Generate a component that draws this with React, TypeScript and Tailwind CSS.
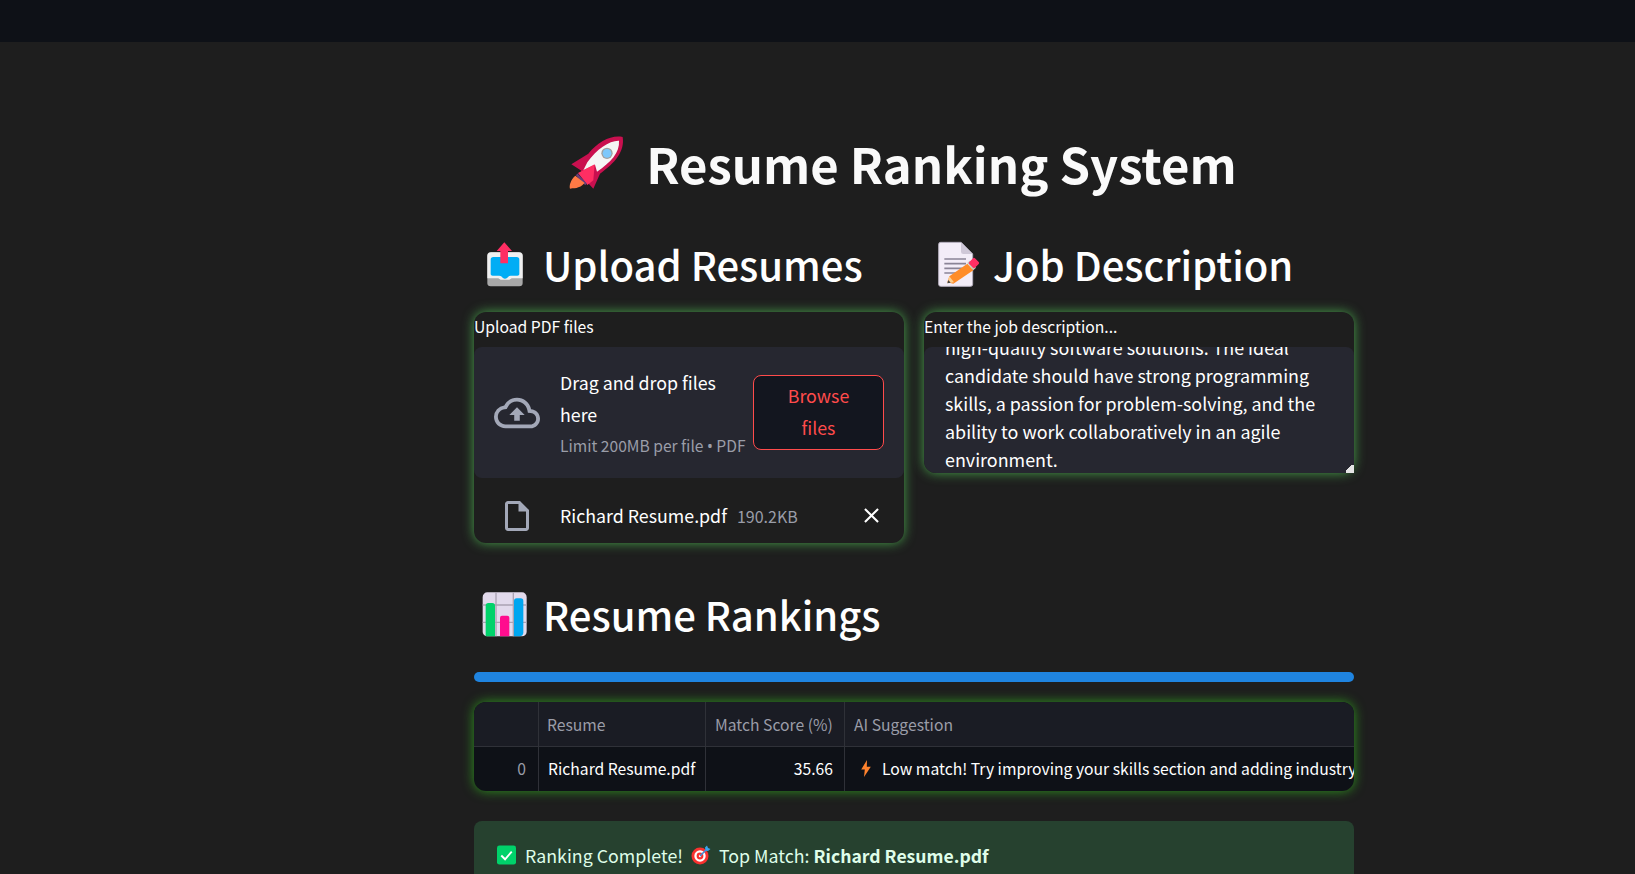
import { MdClose, MdOutlineCloudUpload, MdOutlineInsertDriveFile } from "react-icons/md";

function RocketIcon() {
  return (
    <svg viewBox="0 0 270 240" className="w-[90px] h-[80px] shrink-0">
      <path d="M218 42C185 35 145 55 115 92L64 124L92 142L112 178L130 197L150 152C195 120 225 85 218 42Z" fill="#c9104f" />
      <path d="M207 53C178 52 140 78 112 118L100 142L135 125L141 146C182 118 210 88 207 53Z" fill="#f5f5f5" />
      <circle cx="171" cy="91" r="17" fill="#a0a0a0" />
      <circle cx="171" cy="91" r="13" fill="#7ec8fb" />
      <path d="M134 124L84 150L112 186L130 172Z" fill="#ff2e63" />
      <path d="M80 154L108 184" stroke="#6a3b7a" strokeWidth="7" />
      <path d="M76 158C62 170 57 188 60 197C70 195 78 198 85 193C95 190 100 184 104 180Z" fill="#ff7a45" />
    </svg>
  );
}

function InboxIcon() {
  return (
    <svg viewBox="0 0 240 210" className="w-[80px] h-[70px] shrink-0">
      <rect x="52" y="70" width="106" height="102" rx="10" fill="#a8a8a8" />
      <path d="M52 82Q52 70 64 70H146Q158 70 158 82V148H125L118 152H92L85 148H52Z" fill="#f0f0f0" />
      <path d="M62 92Q62 84 70 84H140Q148 84 148 92V136Q148 140 142 140H122Q116 140 112 146Q105 152 98 146Q94 140 88 140H68Q62 140 62 136Z" fill="#00adf5" />
      <path d="M103 40L126 66H114V103H91V66H80Z" fill="#ff2e63" />
    </svg>
  );
}

function MemoIcon() {
  return (
    <svg viewBox="0 0 240 210" className="w-[80px] h-[70px] shrink-0">
      <path d="M44 40H105L140 75V166Q140 172 134 172H44Q38 172 38 166V46Q38 40 44 40Z" fill="#f3edf8" stroke="#b5afbd" strokeWidth="3" />
      <path d="M105 40L140 75H112Q105 75 105 68Z" fill="#cfc8d8" />
      <path d="M55 90H120M55 104H120M55 118H110M55 132H90" stroke="#8a8496" strokeWidth="5" />
      <path d="M124 104L142 124L82 164L64 160L70 142Z" fill="#ff8c28" />
      <path d="M70 142L64 163L84 160Z" fill="#ffcf8f" />
      <path d="M64 163L67 153L74 161Z" fill="#444" />
      <path d="M124 102L131 95L150 116L142 124Z" fill="#c4c8b8" />
      <rect x="132" y="90" width="24" height="24" rx="4" transform="rotate(45 144 102)" fill="#ff2e63" />
    </svg>
  );
}

function ChartIcon() {
  return (
    <svg viewBox="0 0 240 210" className="w-[80px] h-[70px] shrink-0">
      <rect x="38" y="40" width="132" height="132" rx="14" fill="#e2daec" />
      <path d="M38 78H170M38 130H170M78 40V172M130 40V172" stroke="#aaa3b3" strokeWidth="4" />
      <path d="M47 80Q47 72 55 72H67Q75 72 75 80V172H47Z" fill="#00d26a" />
      <path d="M90 116Q90 110 96 110H112Q118 110 118 116V172H90Z" fill="#ff0d8e" />
      <path d="M132 66Q132 58 140 58H152Q160 58 160 66V160Q160 172 148 172H132Z" fill="#00a6f0" />
    </svg>
  );
}

function CheckIcon() {
  return (
    <svg viewBox="0 0 20 20" className="w-[19px] h-[20px] shrink-0">
      <rect width="20" height="20" rx="2.5" fill="#00d26a" />
      <path d="M4.5 10.5L8.5 14.5L15.5 6.5" stroke="#fff" strokeWidth="2" fill="none" />
    </svg>
  );
}

function TargetIcon() {
  return (
    <svg viewBox="0 0 20 20" className="w-[20px] h-[20px] shrink-0">
      <circle cx="9" cy="11" r="8.5" fill="#f8312f" />
      <circle cx="9" cy="11" r="5.7" fill="#fff" />
      <circle cx="9" cy="11" r="3.4" fill="#f8312f" />
      <circle cx="9" cy="11" r="1.2" fill="#fff" />
      <path d="M9 11L16 4" stroke="#3f8fd6" strokeWidth="1.6" />
      <path d="M14 2.5L16 0.5L17 3L19.5 4L17 6L14.5 5.5Z" fill="#3ba4ef" />
    </svg>
  );
}

function BoltIcon() {
  return (
    <svg viewBox="0 0 10 17" className="w-[10px] h-[17px] shrink-0">
      <path d="M6 0L0.2 9.5H3.8L3 17L9.8 6.8H5.8Z" fill="#ff822d" />
    </svg>
  );
}

function Heading({ icon, iconClass, title }: { icon: React.ReactNode; iconClass: string; title: string }) {
  return (
    <h2 className="flex items-center h-[70px] text-[40px] leading-[70px] font-medium text-white">
      <span className={iconClass}>{icon}</span>
      <span className="-ml-[2px] whitespace-nowrap">{title}</span>
    </h2>
  );
}

export default function App() {
  return (
    <div
      className="h-[874px] overflow-hidden bg-[#1e1e1e] text-white"
      style={{ fontFamily: '"Noto Sans CJK SC", "Noto Sans", sans-serif' }}
    >
      <div className="h-[42px] bg-[#0e1117]"></div>

      <main className="ml-[474px] w-[880px]">
        <h1 className="mt-[81px] pr-[41px] flex justify-center items-center h-[80px] text-[49px] font-bold text-[#fafafa] whitespace-nowrap">
          <RocketIcon />
          <span className="ml-[6px]">Resume Ranking System</span>
        </h1>

        <div className="mt-[26px] flex gap-5">
          <div className="w-[430px]">
            <Heading icon={<InboxIcon />} iconClass="-ml-[4px] w-[75px] h-[70px] shrink-0" title="Upload Resumes" />
            <div className="mt-[13px] h-[231px] bg-[#1e1e1e] rounded-xl shadow-[0_0_12px_rgba(76,175,80,0.9)] overflow-hidden">
              <div className="h-[35px] text-[15.7px] leading-[30px]">Upload PDF files</div>
              <div className="h-[131px] bg-[#262730] rounded-lg flex items-center pl-[20px]">
                <MdOutlineCloudUpload className="shrink-0 text-[#a3a8b8]" size={46} />
                <div className="ml-[20px] w-[186px] shrink-0">
                  <p className="text-[17.8px] leading-[32px]">Drag and drop files here</p>
                  <p className="mt-[2px] text-[15.6px] leading-[26px] text-[#9a9da8] whitespace-nowrap">
                    Limit 200MB per file <span className="font-['Noto_Sans']">•</span> PDF
                  </p>
                </div>
                <button className="ml-[7px] mb-[1px] w-[131px] h-[75px] px-[20px] pb-[3px] bg-[#13161f] border border-[#ff4b4b] rounded-lg text-[17.8px] leading-[32px] text-[#ff4b4b]">
                  Browse files
                </button>
              </div>
              <div className="h-[65px] pt-[10px] flex items-center pl-[25px]">
                <MdOutlineInsertDriveFile className="shrink-0 text-[#a3a8b8]" size={36} />
                <span className="ml-[25px] text-[17.8px] whitespace-nowrap">Richard Resume.pdf</span>
                <span className="ml-[10px] text-base text-[#9a9da8]">190.2KB</span>
                <MdClose className="ml-auto mr-[20px] text-white" size={25} />
              </div>
            </div>
          </div>

          <div className="w-[430px]">
            <Heading icon={<MemoIcon />} iconClass="ml-[2px] w-[69px] h-[70px] shrink-0" title="Job Description" />
            <div className="mt-[13px] h-[161px] bg-[#1e1e1e] rounded-xl shadow-[0_0_12px_rgba(76,175,80,0.9)]">
              <div className="h-[35px] text-[15.7px] leading-[30px]">Enter the job description...</div>
              <div className="relative h-[126px] bg-[#262730] rounded-t-lg rounded-bl-xl overflow-hidden flex flex-col justify-end pl-[21px] text-[17.9px] leading-[28px]">
                <p className="whitespace-nowrap">high-quality software solutions. The ideal</p>
                <p className="whitespace-nowrap">candidate should have strong programming</p>
                <p className="whitespace-nowrap">skills, a passion for problem-solving, and the</p>
                <p className="whitespace-nowrap">ability to work collaboratively in an agile</p>
                <p className="whitespace-nowrap">environment.</p>
                <div className="absolute right-0 bottom-0 w-[8px] h-[8px] bg-[linear-gradient(135deg,transparent_35%,#e5e5e5_35%)]"></div>
              </div>
            </div>
          </div>
        </div>

        <div className="mt-[36px]">
          <Heading icon={<ChartIcon />} iconClass="-ml-[4px] w-[75px] h-[70px] shrink-0" title="Resume Rankings" />
        </div>

        <div className="mt-[23px] h-[10px] bg-[#1f84e0] rounded-full"></div>

        <div className="mt-[20px] h-[89px] bg-[#0e1117] rounded-xl shadow-[0_0_12px_rgba(50,180,30,0.8)] overflow-hidden text-[15.7px]">
          <div className="grid grid-cols-[65px_167px_139px_1fr] h-[45px] bg-[#1a1c24] border-b border-[#2f3138] text-[#9a9da8] leading-[46px]">
            <div className="border-r border-[#2f3138]"></div>
            <div className="border-r border-[#2f3138] pl-[8px]">Resume</div>
            <div className="border-r border-[#2f3138] pl-[9px] whitespace-nowrap">Match Score (%)</div>
            <div className="pl-[9px]">AI Suggestion</div>
          </div>
          <div className="grid grid-cols-[65px_167px_139px_1fr] h-[44px] leading-[43px]">
            <div className="border-r border-[#2f3138] pr-[12px] text-right text-[#9a9da8]">0</div>
            <div className="border-r border-[#2f3138] pl-[9px] whitespace-nowrap">Richard Resume.pdf</div>
            <div className="border-r border-[#2f3138] pr-[11px] text-right">35.66</div>
            <div className="pl-[16px] pb-[1px] flex items-center gap-[11px] whitespace-nowrap overflow-hidden">
              <BoltIcon />
              <span>Low match! Try improving your skills section and adding industry keywords.</span>
            </div>
          </div>
        </div>

        <div className="mt-[30px] h-[80px] bg-[#26412f] rounded-lg pl-[23px] pt-[20px] flex items-start gap-[9px] text-[17.8px] leading-[28px] text-[#dffde9]">
          <span className="h-[28px] flex items-center"><CheckIcon /></span>
          <span className="whitespace-nowrap">Ranking Complete!</span>
          <span className="-ml-[1px] h-[28px] flex items-center"><TargetIcon /></span>
          <span className="-ml-[1px] whitespace-nowrap">Top Match: <strong className="font-bold text-[17.6px]">Richard Resume.pdf</strong></span>
        </div>
      </main>
    </div>
  );
}
